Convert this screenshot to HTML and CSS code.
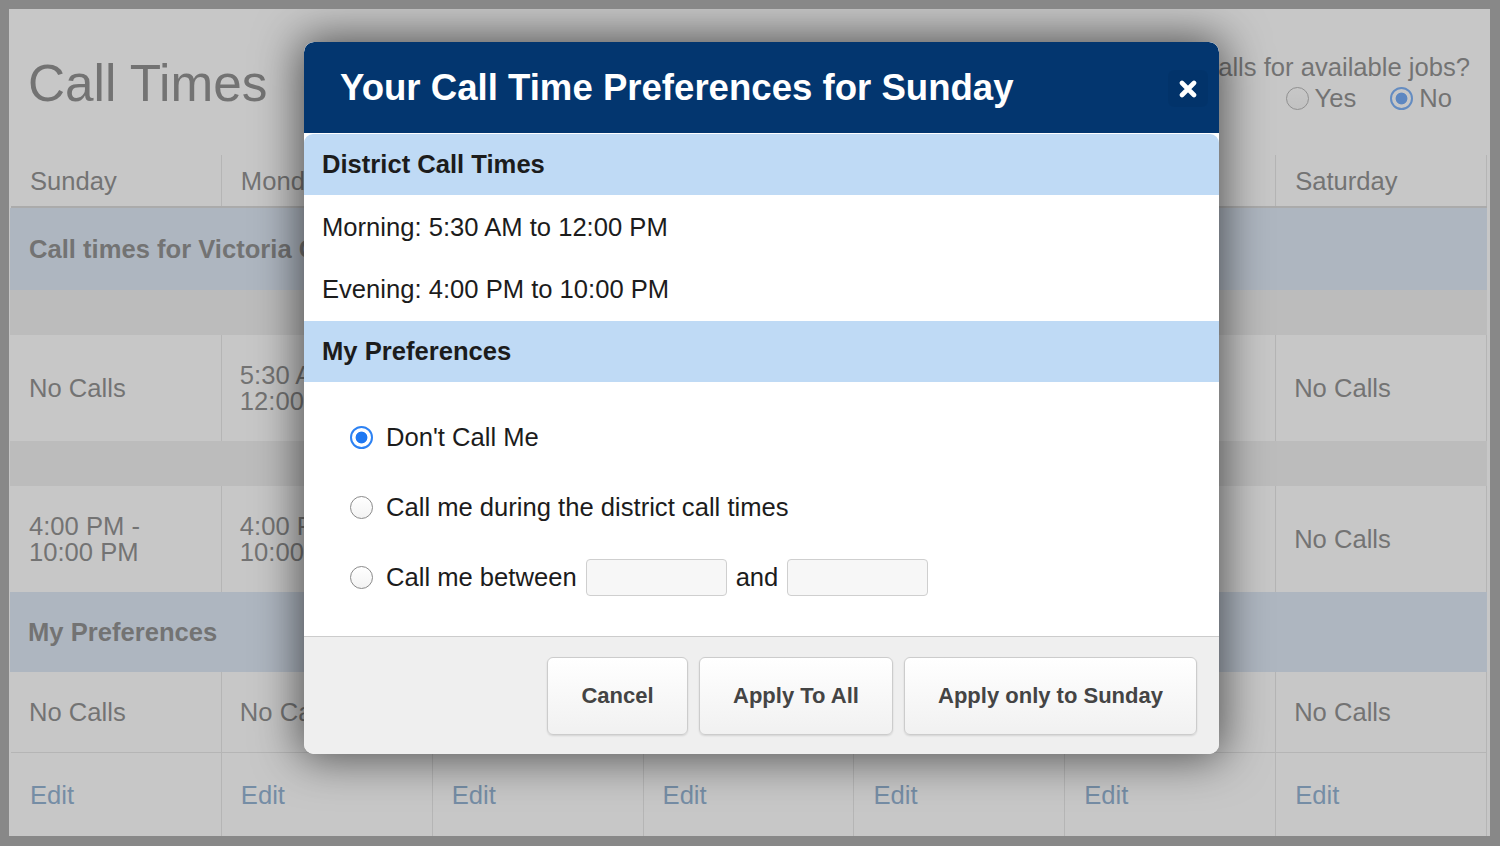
FILE: index.html
```html
<!DOCTYPE html>
<html>
<head>
    <title>Call Times</title>
    <link rel="stylesheet" href="styles.css">
</head>

<body>
<div class="screen">
    <div class="page">
        <div class="top">
            <h1>Call Times</h1>
            <div class="optin">
                <div class="question">Would you like to receive calls for available jobs?</div>
                <div class="choices">
                    <label><input type="radio" name="optin"> Yes</label>
                    <label><input type="radio" name="optin" checked> No</label>
                </div>
            </div>
        </div>

        <div class="week">
            <div class="row head">
                <div class="cell">Sunday</div>
                <div class="cell">Monday</div>
                <div class="cell">Tuesday</div>
                <div class="cell">Wednesday</div>
                <div class="cell">Thursday</div>
                <div class="cell">Friday</div>
                <div class="cell">Saturday</div>
            </div>
            <div class="band district">Call times for Victoria County</div>
            <div class="spacer"></div>
            <div class="row times">
                <div class="cell">No Calls</div>
                <div class="cell">5:30 AM - 12:00 PM</div>
                <div class="cell">5:30 AM - 12:00 PM</div>
                <div class="cell">5:30 AM - 12:00 PM</div>
                <div class="cell">5:30 AM - 12:00 PM</div>
                <div class="cell">5:30 AM - 12:00 PM</div>
                <div class="cell">No Calls</div>
            </div>
            <div class="spacer"></div>
            <div class="row times">
                <div class="cell">4:00 PM - 10:00 PM</div>
                <div class="cell">4:00 PM - 10:00 PM</div>
                <div class="cell">4:00 PM - 10:00 PM</div>
                <div class="cell">4:00 PM - 10:00 PM</div>
                <div class="cell">4:00 PM - 10:00 PM</div>
                <div class="cell">4:00 PM - 10:00 PM</div>
                <div class="cell">No Calls</div>
            </div>
            <div class="band prefs">My Preferences</div>
            <div class="row mine">
                <div class="cell">No Calls</div>
                <div class="cell">No Calls</div>
                <div class="cell">No Calls</div>
                <div class="cell">No Calls</div>
                <div class="cell">No Calls</div>
                <div class="cell">No Calls</div>
                <div class="cell">No Calls</div>
            </div>
            <div class="row edits">
                <div class="cell"><a href="#">Edit</a></div>
                <div class="cell"><a href="#">Edit</a></div>
                <div class="cell"><a href="#">Edit</a></div>
                <div class="cell"><a href="#">Edit</a></div>
                <div class="cell"><a href="#">Edit</a></div>
                <div class="cell"><a href="#">Edit</a></div>
                <div class="cell"><a href="#">Edit</a></div>
            </div>
        </div>
    </div>

    <div class="overlay"></div>

    <div class="modal">
        <div class="modal-header">
            <h2>Your Call Time Preferences for Sunday</h2>
            <button class="close" type="button">
                <svg width="18" height="18" viewBox="0 0 18 18"><path d="M3 3L15 15M15 3L3 15" stroke="#fff" stroke-width="4.6" stroke-linecap="round"/></svg>
            </button>
        </div>
        <div class="section first">District Call Times</div>
        <div class="district-times">
            <p>Morning: 5:30 AM to 12:00 PM</p>
            <p>Evening: 4:00 PM to 10:00 PM</p>
        </div>
        <div class="section">My Preferences</div>
        <form class="choices-form">
            <label class="choice"><input type="radio" name="pref" checked> Don't Call Me</label>
            <label class="choice"><input type="radio" name="pref"> Call me during the district call times</label>
            <label class="choice"><input type="radio" name="pref"> Call me between <input type="text" class="time"> and <input type="text" class="time"></label>
        </form>
        <div class="modal-footer">
            <button type="button" class="btn cancel">Cancel</button>
            <button type="button" class="btn all">Apply To All</button>
            <button type="button" class="btn only">Apply only to Sunday</button>
        </div>
    </div>
</div>
</body>
</html>
```

FILE: styles.css
```css
body {
    margin: 0;
    background-color: #888888;
    font-family: 'Liberation Sans', Arial, sans-serif;
    font-size: 25.6px;
}

.screen {
    position: relative;
    width: 1481px;
    height: 827px;
    margin: 9px 10px 10px 9px;
    background-color: #ffffff;
    overflow: hidden;
}

.page {
    color: #4e4e4e;
}

.top {
    height: 146px;
    display: flex;
    justify-content: space-between;
}

h1 {
    margin: 50px 0 0 19px;
    font-size: 51.3px;
    line-height: 50px;
    font-weight: normal;
}

.optin {
    padding: 43px 20px 0 0;
    text-align: right;
    line-height: 31px;
}

.choices {
    display: flex;
    justify-content: flex-end;
    gap: 34px;
    padding-right: 18px;
}

.choices label {
    display: flex;
    align-items: center;
    gap: 6px;
}

input[type=radio] {
    appearance: none;
    -webkit-appearance: none;
    width: 23px;
    height: 23px;
    margin: 0;
    border: 1px solid #8a8a8a;
    border-radius: 50%;
    background: linear-gradient(#ffffff, #f3f3f3);
    box-sizing: border-box;
}

input[type=radio]:checked {
    border: 2px solid #2d82f3;
    background: radial-gradient(circle, #1f78f2 0 5.5px, #ffffff 6.3px);
}

.week {
    margin-left: 2px;
    width: 1476px;
}

.row {
    display: grid;
    grid-template-columns: repeat(7, 1fr);
}

.cell {
    display: flex;
    align-items: center;
    padding-left: 18px;
    padding-right: 32px;
    border-right: 1px solid #d8d8d8;
    line-height: 26px;
}

.head {
    height: 53px;
    border-bottom: 2px solid #c4c4c4;
    box-sizing: border-box;
}

.head .cell {
    padding-left: 19px;
}

.band {
    display: flex;
    align-items: center;
    padding-left: 19px;
    margin-left: -1px;
    background-color: #c9dcf1;
    font-weight: bold;
}

.district {
    height: 82px;
}

.prefs {
    height: 80px;
    padding-left: 18px;
}

.spacer {
    height: 45px;
    margin-left: -1px;
    background-color: #e7e7e7;
}

.times {
    height: 106px;
}

.mine {
    height: 81px;
    border-bottom: 1px solid #d8d8d8;
    box-sizing: border-box;
}

.edits {
    height: 83px;
}

.edits .cell {
    padding-left: 19px;
}

.edits a {
    color: #5285b8;
    text-decoration: none;
}

.overlay {
    position: absolute;
    top: 0;
    left: 0;
    right: 0;
    bottom: 0;
    background-color: rgba(150, 150, 150, 0.53);
}

.modal {
    position: absolute;
    left: 295px;
    top: 33px;
    width: 915px;
    background-color: #ffffff;
    border-radius: 10px;
    overflow: hidden;
    box-shadow: 0 0 45px 4px rgba(0, 0, 0, 0.6);
    color: #1c1c1c;
}

.modal-header {
    height: 91px;
    background-color: #03366f;
    display: flex;
    align-items: center;
    justify-content: space-between;
    padding: 0 11px 0 36px;
    margin-bottom: 1px;
    border-radius: 10px 10px 0 0;
}

.modal-header h2 {
    margin: 0;
    color: #ffffff;
    font-size: 36.6px;
    font-weight: bold;
}

.close {
    width: 40px;
    height: 37px;
    border: none;
    border-radius: 6px;
    background-color: rgba(0, 0, 0, 0.04);
    display: flex;
    align-items: center;
    justify-content: center;
    padding: 0;
    margin-top: 2px;
}

.section {
    height: 61px;
    display: flex;
    align-items: center;
    padding-left: 18px;
    background-color: #bfdaf5;
    font-weight: bold;
}

.section.first {
    border-radius: 9px 9px 0 0;
}

.district-times {
    height: 126px;
    padding-left: 18px;
    box-sizing: border-box;
}

.district-times p {
    margin: 0;
    height: 62px;
    line-height: 64px;
}

.choices-form {
    height: 254px;
    padding: 20px 0 0 46px;
    box-sizing: border-box;
}

.choice {
    height: 70px;
    display: flex;
    align-items: center;
    gap: 13px;
}

.time {
    width: 141px;
    height: 37px;
    box-sizing: border-box;
    border: 1px solid #cfcfcf;
    border-radius: 4px;
    background-color: #f7f7f7;
    margin: 0 -4px;
}

.modal-footer {
    height: 118px;
    box-sizing: border-box;
    border-top: 1px solid #cccccc;
    background-color: #efefef;
    display: flex;
    justify-content: flex-end;
    gap: 11px;
    padding: 20px 22px 0 0;
}

.btn {
    height: 78px;
    border: 1px solid #cccccc;
    border-radius: 6px;
    background: linear-gradient(#ffffff, #f1f1f1);
    box-shadow: 0 1px 2px rgba(0, 0, 0, 0.12);
    font-family: 'Liberation Sans', Arial, sans-serif;
    font-size: 22px;
    font-weight: bold;
    color: #444444;
    padding: 0;
}

.cancel {
    width: 141px;
}

.all {
    width: 194px;
}

.only {
    width: 293px;
}
```
